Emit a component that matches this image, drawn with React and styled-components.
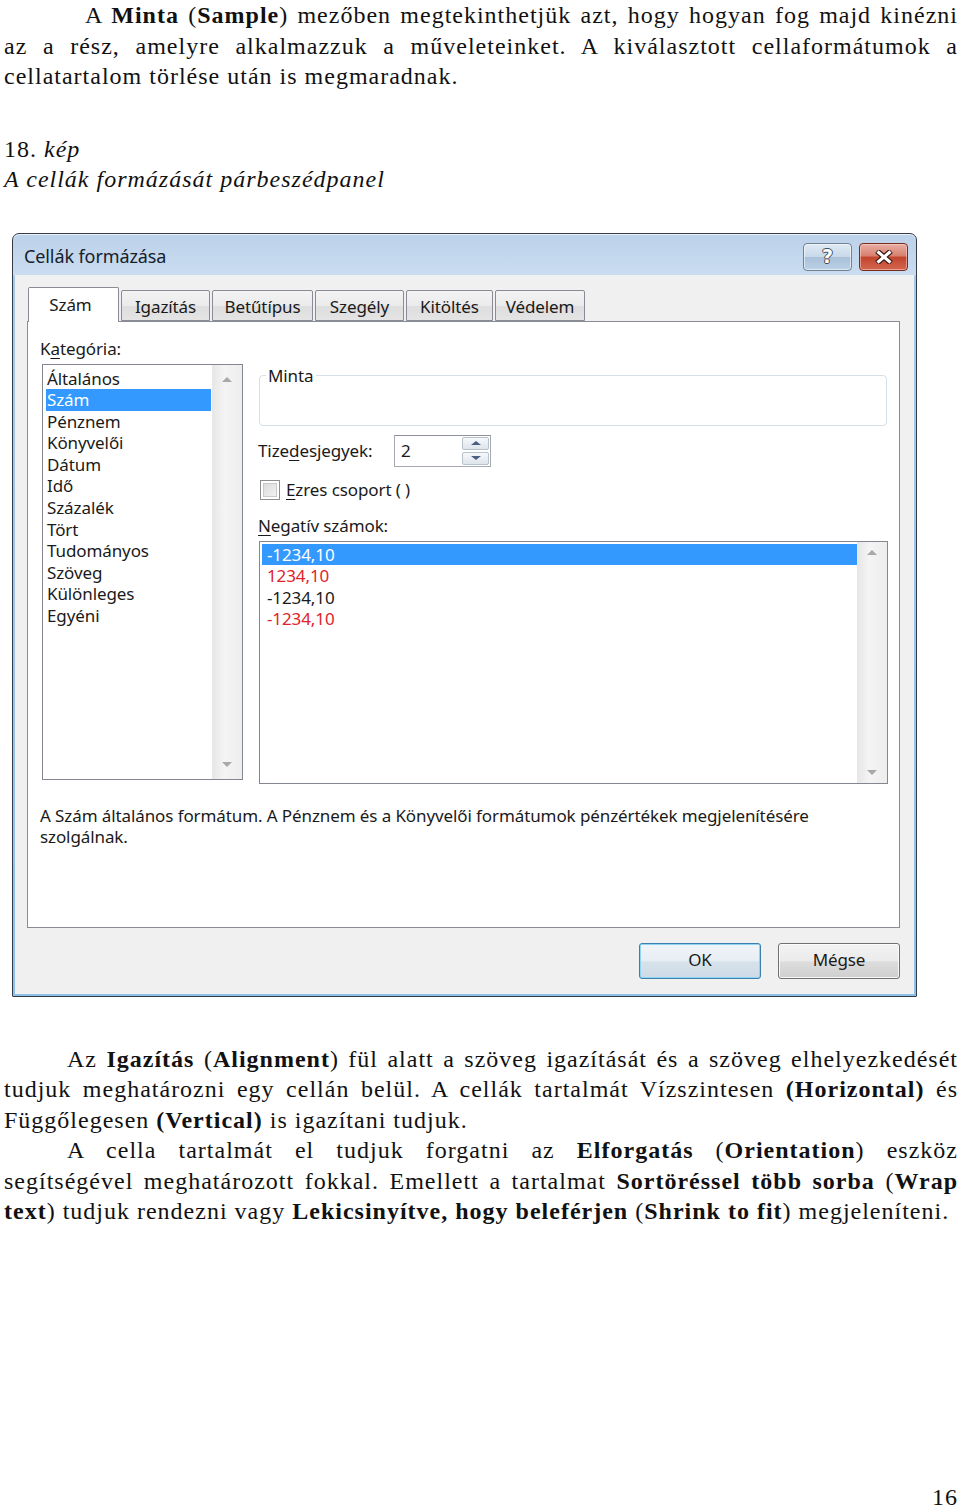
import React from 'react'
import styled, { createGlobalStyle } from 'styled-components'

const GlobalStyle = createGlobalStyle`
  html, body {
    margin: 0;
    padding: 0;
    background: #ffffff;
    overflow: hidden;
  }
`

const categories = ['Általános', 'Szám', 'Pénznem', 'Könyvelői', 'Dátum', 'Idő', 'Százalék', 'Tört', 'Tudományos', 'Szöveg', 'Különleges', 'Egyéni']

const negatives = [
  { text: '-1234,10', red: false },
  { text: '1234,10', red: true },
  { text: '-1234,10', red: false },
  { text: '-1234,10', red: true },
]

const tabs = [
  { label: 'Szám', w: 91 },
  { label: 'Igazítás', w: 89 },
  { label: 'Betűtípus', w: 101 },
  { label: 'Szegély', w: 89 },
  { label: 'Kitöltés', w: 87 },
  { label: 'Védelem', w: 90 },
]

const App = () => {
  return (
    <Page>
      <GlobalStyle />
      <Para $indent={81}>
        A <b>Minta</b> (<b>Sample</b>) mezőben megtekinthetjük azt, hogy hogyan fog majd kinézni az a rész,
        amelyre alkalmazzuk a műveleteinket. A kiválasztott cellaformátumok a cellatartalom törlése után is
        megmaradnak.
      </Para>

      <Caption>
        18. <i>kép</i>
        <br />
        <i>A cellák formázását párbeszédpanel</i>
      </Caption>

      <Dialog>
        <TitleBar>
          <Title>Cellák formázása</Title>
          <Controls>
            <HelpButton>?</HelpButton>
            <CloseButton>
              <svg width="20" height="14" viewBox="0 0 20 14">
                <path d="M3 1 L17 13 M17 1 L3 13" stroke="#3a1a14" strokeWidth="5.5" fill="none" />
                <path d="M3.5 1.5 L16.5 12.5 M16.5 1.5 L3.5 12.5" stroke="#ffffff" strokeWidth="3" fill="none" />
              </svg>
            </CloseButton>
          </Controls>
        </TitleBar>

        <Client>
          <TabRow>
            {tabs.map((t, i) => (
              <Tab key={t.label} $w={t.w} $active={i === 0}>{t.label}</Tab>
            ))}
          </TabRow>

          <Panel>
            <Columns>
              <LeftCol>
                <Label>K<u>a</u>tegória:</Label>
                <ListBox $height={416} $ml={2}>
                  <Items $pad="3px 1px 0 3px">
                    {categories.map((c, i) => (
                      <Item key={c} $selected={i === 1} $pl={1}>{c}</Item>
                    ))}
                  </Items>
                  <ScrollBar $inset={12}>
                    <Arrow $up />
                    <Arrow />
                  </ScrollBar>
                </ListBox>
              </LeftCol>

              <RightCol>
                <Group>
                  <Legend>Minta</Legend>
                  <GroupBody />
                </Group>

                <SpinRow>
                  <Label $w={136}>Tize<u>d</u>esjegyek:</Label>
                  <SpinBox>
                    <SpinValue>2</SpinValue>
                    <SpinButtons>
                      <SpinHalf><SpinArrow $up /></SpinHalf>
                      <SpinHalf><SpinArrow /></SpinHalf>
                    </SpinButtons>
                  </SpinBox>
                </SpinRow>

                <CheckRow>
                  <CheckBox />
                  <Label><u>E</u>zres csoport ( )</Label>
                </CheckRow>

                <Label $mt={14}><u>N</u>egatív számok:</Label>
                <ListBox $height={243} $ml={1} $mt={4}>
                  <Items $pad="2px 0 0 2px">
                    {negatives.map((n, i) => (
                      <Item key={i} $selected={i === 0} $red={n.red} $pl={5}>{n.text}</Item>
                    ))}
                  </Items>
                  <ScrollBar $inset={8}>
                    <Arrow $up />
                    <Arrow />
                  </ScrollBar>
                </ListBox>
              </RightCol>
            </Columns>

            <Description>
              A Szám általános formátum. A Pénznem és a Könyvelői formátumok pénzértékek megjelenítésére
              <br />
              szolgálnak.
            </Description>
          </Panel>

          <ButtonRow>
            <Button $default>OK</Button>
            <Button>Mégse</Button>
          </ButtonRow>
        </Client>
      </Dialog>

      <Para $indent={63} $mt={47}>
        Az <b>Igazítás</b> (<b>Alignment</b>) fül alatt a szöveg igazítását és a szöveg elhelyezkedését tudjuk
        meghatározni egy cellán belül. A cellák tartalmát Vízszintesen <b>(Horizontal)</b> és Függőlegesen{' '}
        <b>(Vertical)</b> is igazítani tudjuk.
      </Para>
      <Para $indent={63}>
        A cella tartalmát el tudjuk forgatni az <b>Elforgatás</b> (<b>Orientation</b>) eszköz segítségével
        meghatározott fokkal. Emellett a tartalmat <b>Sortöréssel több sorba</b> (<b>Wrap text</b>) tudjuk
        rendezni vagy <b>Lekicsinyítve, hogy beleférjen</b> (<b>Shrink to fit</b>) megjeleníteni.
      </Para>

      <PageNumber>16</PageNumber>
    </Page>
  )
}

const Page = styled.div`
  width: 960px;
  box-sizing: border-box;
  padding: 0 2px 0 4px;
  font-family: "Liberation Serif", "Times New Roman", serif;
  font-size: 24px;
  line-height: 30.5px;
  letter-spacing: 1px;
  color: #111;
`

const Para = styled.p`
  margin: ${p => p.$mt || 0}px 0 0;
  text-align: justify;
  text-indent: ${p => p.$indent}px;
`

const Caption = styled.p`
  margin: 42px 0 0;
`

const Dialog = styled.div`
  margin: 38px 0 0 8px;
  width: 905px;
  height: 764px;
  box-sizing: border-box;
  border: 1px solid #333c46;
  border-radius: 7px 7px 1px 1px;
  padding: 0 2px 2px;
  display: flex;
  flex-direction: column;
  background: linear-gradient(180deg, #bcd2ea 0px, #c9dcf0 41px, #a6c9ea 42px, #8fc0e8 100%);
  box-shadow: inset 0 1px 0 rgba(255, 255, 255, 0.7);
  font-family: "Noto Sans", "Open Sans", sans-serif;
  font-size: 17px;
  letter-spacing: -0.1px;
  color: #1a1a1a;
`

const TitleBar = styled.div`
  height: 41px;
  display: flex;
  align-items: flex-start;
  justify-content: space-between;
  padding: 0 6px 0 9px;
`

const Title = styled.div`
  font-size: 18px;
  line-height: 22px;
  margin-top: 11px;
  color: #16202c;
`

const Controls = styled.div`
  display: flex;
  gap: 7px;
  margin-top: 9px;
`

const CtrlButton = styled.div`
  width: 49px;
  height: 28px;
  box-sizing: border-box;
  border-radius: 4px;
  display: flex;
  align-items: center;
  justify-content: center;
`

const HelpButton = styled(CtrlButton)`
  border: 1px solid #6f8193;
  background: linear-gradient(180deg, #dfe9f4 0%, #c9d9ea 48%, #a9c1da 52%, #bcd1e6 100%);
  box-shadow: inset 0 0 0 1px rgba(255, 255, 255, 0.55);
  font-family: "DejaVu Sans", sans-serif;
  font-weight: bold;
  font-size: 19px;
  color: #ffffff;
  text-shadow: 1px 0 0 #3f4a57, -1px 0 0 #3f4a57, 0 1px 0 #3f4a57, 0 -1px 0 #3f4a57;
`

const CloseButton = styled(CtrlButton)`
  border: 1px solid #7a2b20;
  background: linear-gradient(180deg, #e7b0a5 0%, #d8806e 45%, #c2442e 52%, #d4684f 100%);
  box-shadow: inset 0 0 0 1px rgba(255, 220, 210, 0.5);
`

const Client = styled.div`
  flex: 1;
  background: #f0f0f0;
  padding: 12px 14px 15px 12px;
  display: flex;
  flex-direction: column;
`

const TabRow = styled.div`
  height: 34px;
  display: flex;
  align-items: flex-end;
  gap: 2px;
  padding-left: 1px;
  position: relative;
  z-index: 1;
`

const Tab = styled.div`
  width: ${p => p.$w}px;
  height: ${p => (p.$active ? 35 : 31)}px;
  margin-bottom: ${p => (p.$active ? -1 : 0)}px;
  box-sizing: border-box;
  border: 1px solid #898c95;
  border-bottom: ${p => (p.$active ? 'none' : '1px solid #898c95')};
  border-radius: 2px 2px 0 0;
  background: ${p => (p.$active ? '#ffffff' : 'linear-gradient(180deg, #f3f3f3 0%, #ebebeb 50%, #dedede 52%, #e4e4e4 100%)')};
  display: flex;
  align-items: center;
  justify-content: center;
  padding-top: ${p => (p.$active ? 0 : 3)}px;
  padding-right: ${p => (p.$active ? 6 : 0)}px;
  line-height: 20px;
`

const Panel = styled.div`
  height: 607px;
  box-sizing: border-box;
  border: 1px solid #898c95;
  background: #ffffff;
  padding: 16px 10px 0 12px;
`

const Columns = styled.div`
  display: flex;
  gap: 13px;
`

const LeftCol = styled.div`
  width: 205px;
  display: flex;
  flex-direction: column;
  gap: 4px;
`

const RightCol = styled.div`
  flex: 1;
  margin-top: 28px;
  display: flex;
  flex-direction: column;
`

const Label = styled.div`
  line-height: 22px;
  height: 22px;
  white-space: nowrap;
  margin-top: ${p => p.$mt || 0}px;
  width: ${p => (p.$w ? `${p.$w}px` : 'auto')};
  flex-shrink: 0;

  u {
    text-underline-offset: 3px;
    text-decoration-thickness: 1px;
  }
`

const ListBox = styled.div`
  height: ${p => p.$height}px;
  margin: ${p => p.$mt || 0}px ${p => p.$ml}px 0 ${p => p.$ml}px;
  box-sizing: border-box;
  border: 1px solid #828790;
  background: #ffffff;
  display: flex;
`

const Items = styled.div`
  flex: 1;
  padding: ${p => p.$pad};
`

const Item = styled.div`
  height: 21.6px;
  line-height: 21.6px;
  padding-left: ${p => p.$pl}px;
  background: ${p => (p.$selected ? '#3399ff' : 'transparent')};
  color: ${p => (p.$selected ? '#ffffff' : p.$red ? '#e0232b' : '#1a1a1a')};
  white-space: nowrap;
`

const ScrollBar = styled.div`
  width: 30px;
  background: linear-gradient(90deg, #e6e6e6, #f4f4f4 40%, #ededed);
  display: flex;
  flex-direction: column;
  justify-content: space-between;
  align-items: center;
  padding: ${p => p.$inset}px 0;
  box-sizing: border-box;
`

const Arrow = styled.div`
  width: 0;
  height: 0;
  border-left: 5px solid transparent;
  border-right: 5px solid transparent;
  ${p => (p.$up ? 'border-bottom: 5px solid #a8a8a8;' : 'border-top: 5px solid #a8a8a8;')}
`

const Group = styled.fieldset`
  margin: 0 2px 0 1px;
  padding: 0;
  border: 1px solid #d5dfe5;
  border-radius: 4px;
`

const Legend = styled.legend`
  margin-left: 6px;
  padding: 0 2px;
  line-height: 20px;
`

const GroupBody = styled.div`
  height: 39px;
`

const SpinRow = styled.div`
  display: flex;
  align-items: center;
  margin-top: 9px;
`

const SpinBox = styled.div`
  width: 97px;
  height: 32px;
  box-sizing: border-box;
  border: 1px solid #a4a9b2;
  border-top-color: #8e939b;
  background: #ffffff;
  display: flex;
  align-items: center;
  justify-content: space-between;
  padding: 1px 1px 1px 6px;
`

const SpinValue = styled.div`
  line-height: 22px;
`

const SpinButtons = styled.div`
  width: 27px;
  height: 28px;
  display: flex;
  flex-direction: column;
  gap: 2px;
`

const SpinHalf = styled.div`
  flex: 1;
  box-sizing: border-box;
  border: 1px solid #b8c2cd;
  border-radius: 2px;
  background: linear-gradient(180deg, #f6f8fa, #dfe5ec);
  display: flex;
  align-items: center;
  justify-content: center;
`

const SpinArrow = styled.div`
  width: 0;
  height: 0;
  border-left: 5px solid transparent;
  border-right: 5px solid transparent;
  ${p => (p.$up ? 'border-bottom: 4px solid #4b5f84;' : 'border-top: 4px solid #4b5f84;')}
`

const CheckRow = styled.div`
  display: flex;
  align-items: center;
  gap: 6px;
  margin-top: 12px;
  padding-left: 2px;
`

const CheckBox = styled.div`
  width: 20px;
  height: 20px;
  box-sizing: border-box;
  border: 1px solid #8f8f8f;
  background: #f4f4f4;
  box-shadow: inset 0 0 0 2px #ffffff, inset 0 0 0 3px #c9c9c9;
  background-image: linear-gradient(135deg, #d8d8d8, #f6f6f6);
`

const Description = styled.div`
  margin-top: 21px;
  line-height: 21.5px;
`

const ButtonRow = styled.div`
  display: flex;
  justify-content: flex-end;
  gap: 17px;
  margin-top: 15px;
`

const Button = styled.div`
  width: 122px;
  height: 36px;
  box-sizing: border-box;
  border: 1px solid ${p => (p.$default ? '#3c7fb1' : '#707070')};
  border-radius: 3px;
  background: ${p =>
    p.$default
      ? 'linear-gradient(180deg, #f0f5f9 0%, #e6eef4 50%, #d7e3ec 52%, #cddbe6 100%)'
      : 'linear-gradient(180deg, #f2f2f2 0%, #ebebeb 50%, #dddddd 52%, #cfcfcf 100%)'};
  box-shadow: inset 0 0 0 1px ${p => (p.$default ? '#8fd4f2' : 'rgba(255, 255, 255, 0.8)')};
  display: flex;
  align-items: center;
  justify-content: center;
`

const PageNumber = styled.div`
  margin-top: 260px;
  text-align: right;
  line-height: 20px;
`

export default App
